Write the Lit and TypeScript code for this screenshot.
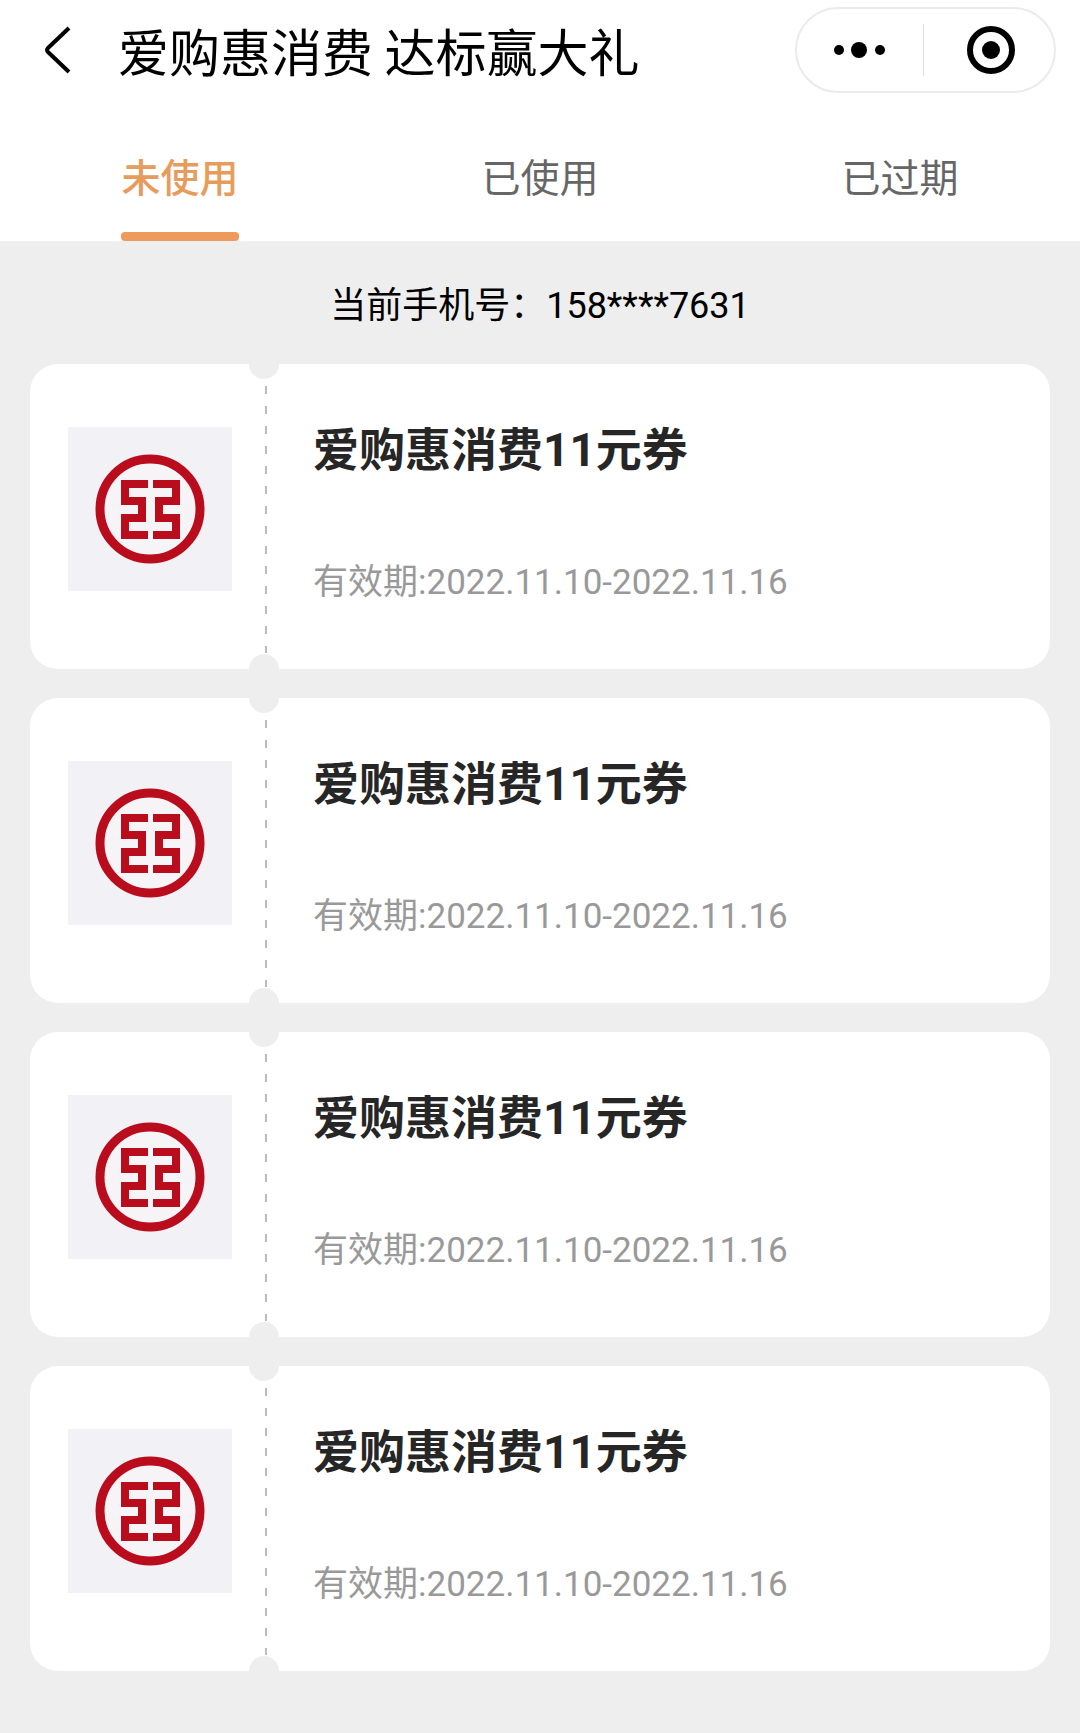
import { LitElement, html, css } from "lit";
import { customElement, property, state } from "lit/decorators.js";

interface Coupon {
  title: string;
  validity: string;
}

const TABS = ["未使用", "已使用", "已过期"];

const COUPONS: Coupon[] = Array.from({ length: 4 }, () => ({
  title: "爱购惠消费11元券",
  validity: "有效期:2022.11.10-2022.11.16",
}));

@customElement("coupon-card")
export class CouponCard extends LitElement {
  @property() heading = "";
  @property() validity = "";

  static styles = css`
    :host {
      display: block;
    }
    .card {
      position: relative;
      display: flex;
      min-height: 305px;
      box-sizing: border-box;
      overflow: hidden;
      border-radius: 28px;
      background: #fff;
    }
    .stub {
      flex: none;
      box-sizing: border-box;
      width: 235px;
      padding: 63px 33px 0 38px;
    }
    .logo {
      display: block;
      width: 164px;
      height: 164px;
      background: #f1f1f6;
    }
    .perforation {
      flex: none;
      width: 2px;
      margin: 22px 0 16px;
      background: repeating-linear-gradient(#bbb 0 8px, transparent 8px 20px);
    }
    .notch {
      position: absolute;
      left: 219px;
      width: 30px;
      height: 30px;
      border-radius: 50%;
      background: #eee;
    }
    .notch.top {
      top: -15px;
    }
    .notch.bottom {
      bottom: -15px;
    }
    .info {
      flex: 1;
      display: flex;
      flex-direction: column;
      gap: 73px;
      padding: 56px 24px 0 46px;
      font-family: Roboto, "Noto Sans CJK SC", sans-serif;
    }
    .title {
      margin: 0;
      font-size: 46px;
      line-height: 60px;
      font-weight: 700;
      color: #262626;
    }
    .validity {
      margin: 0;
      font-size: 35px;
      line-height: 60px;
      color: #999;
    }
  `;

  render() {
    return html`
      <article class="card">
        <div class="stub">
          <svg class="logo" viewBox="0 0 164 164" aria-hidden="true">
            <circle cx="82" cy="82" r="50" fill="#f7f4f8" stroke="#b90c1c" stroke-width="9"></circle>
            <g fill="none" stroke="#b90c1c" stroke-width="8">
              <path d="M80 57H57V74H74V91H57V108H80"></path>
              <path d="M85 57H108V74H91V91H108V108H85"></path>
            </g>
          </svg>
        </div>
        <div class="perforation"></div>
        <div class="info">
          <h2 class="title">${this.heading}</h2>
          <p class="validity">${this.validity}</p>
        </div>
        <span class="notch top"></span>
        <span class="notch bottom"></span>
      </article>
    `;
  }
}

@customElement("app-root")
export class AppRoot extends LitElement {
  @state() private active = 0;

  static styles = css`
    :host {
      display: block;
      min-height: 100vh;
      background: #eee;
      color: #000;
      font-family: "Noto Sans CJK SC", sans-serif;
    }
    button {
      margin: 0;
      padding: 0;
      border: 0;
      background: none;
      color: inherit;
      font: inherit;
      cursor: pointer;
    }
    .top {
      background: #fff;
    }
    .bar {
      display: flex;
      align-items: center;
      height: 100px;
      padding: 0 24px 0 32px;
    }
    .back {
      flex: none;
      width: 52px;
      height: 60px;
    }
    .back svg,
    .capsule svg {
      display: block;
      margin: auto;
    }
    .name {
      flex: 1;
      margin: 0 0 0 34px;
      font-size: 51px;
      line-height: 72px;
      font-weight: 400;
      white-space: nowrap;
    }
    .capsule {
      flex: none;
      display: flex;
      align-items: center;
      box-sizing: border-box;
      width: 261px;
      height: 86px;
      border: 2px solid #ebebeb;
      border-radius: 43px;
    }
    .capsule button {
      flex: 1;
      height: 100%;
    }
    .capsule .close {
      padding-left: 5px;
    }
    .divider {
      width: 1px;
      height: 52px;
      background: #ddd;
    }
    .tabs {
      display: grid;
      grid-template-columns: repeat(3, 1fr);
      justify-items: center;
      height: 141px;
    }
    .tab {
      display: flex;
      flex-direction: column;
      justify-content: space-between;
      padding-top: 47px;
      font-size: 39px;
      line-height: 56px;
      color: #666;
    }
    .tab::after {
      content: "";
      height: 9px;
      border-radius: 4px;
    }
    .tab.active {
      color: #e69c5c;
      font-weight: 500;
    }
    .tab.active::after {
      background: #ee9a5c;
    }
    .content {
      padding: 35px 30px 62px;
    }
    .phone {
      margin: 0 0 28px;
      text-align: center;
      font-family: Roboto, "Noto Sans CJK SC", sans-serif;
      font-size: 36px;
      line-height: 60px;
    }
    .list {
      display: grid;
      gap: 29px;
    }
  `;

  render() {
    return html`
      <header class="top">
        <div class="bar">
          <button class="back" aria-label="返回">
            <svg width="28" height="48" viewBox="0 0 28 48" fill="none" stroke="#000" stroke-width="4">
              <path d="M25 2L4 22Q2 24 4 26L25 46"></path>
            </svg>
          </button>
          <h1 class="name">爱购惠消费 达标赢大礼</h1>
          <div class="capsule">
            <button aria-label="更多">
              <svg width="52" height="20" viewBox="0 0 52 20">
                <circle cx="5" cy="10" r="5"></circle>
                <circle cx="25" cy="10" r="8"></circle>
                <circle cx="46" cy="10" r="5"></circle>
              </svg>
            </button>
            <span class="divider"></span>
            <button class="close" aria-label="关闭">
              <svg width="48" height="48" viewBox="0 0 48 48">
                <circle cx="24" cy="24" r="21" fill="none" stroke="#000" stroke-width="6"></circle>
                <circle cx="24" cy="24" r="9"></circle>
              </svg>
            </button>
          </div>
        </div>
        <nav class="tabs" role="tablist">
          ${TABS.map(
            (label, i) => html`
              <button
                class="tab ${i === this.active ? "active" : ""}"
                role="tab"
                aria-selected=${i === this.active}
                @click=${() => (this.active = i)}
              >
                ${label}
              </button>
            `
          )}
        </nav>
      </header>
      <main class="content">
        <p class="phone">当前手机号：158****7631</p>
        <div class="list">
          ${COUPONS.map(
            (c) => html`<coupon-card .heading=${c.title} .validity=${c.validity}></coupon-card>`
          )}
        </div>
      </main>
    `;
  }
}
